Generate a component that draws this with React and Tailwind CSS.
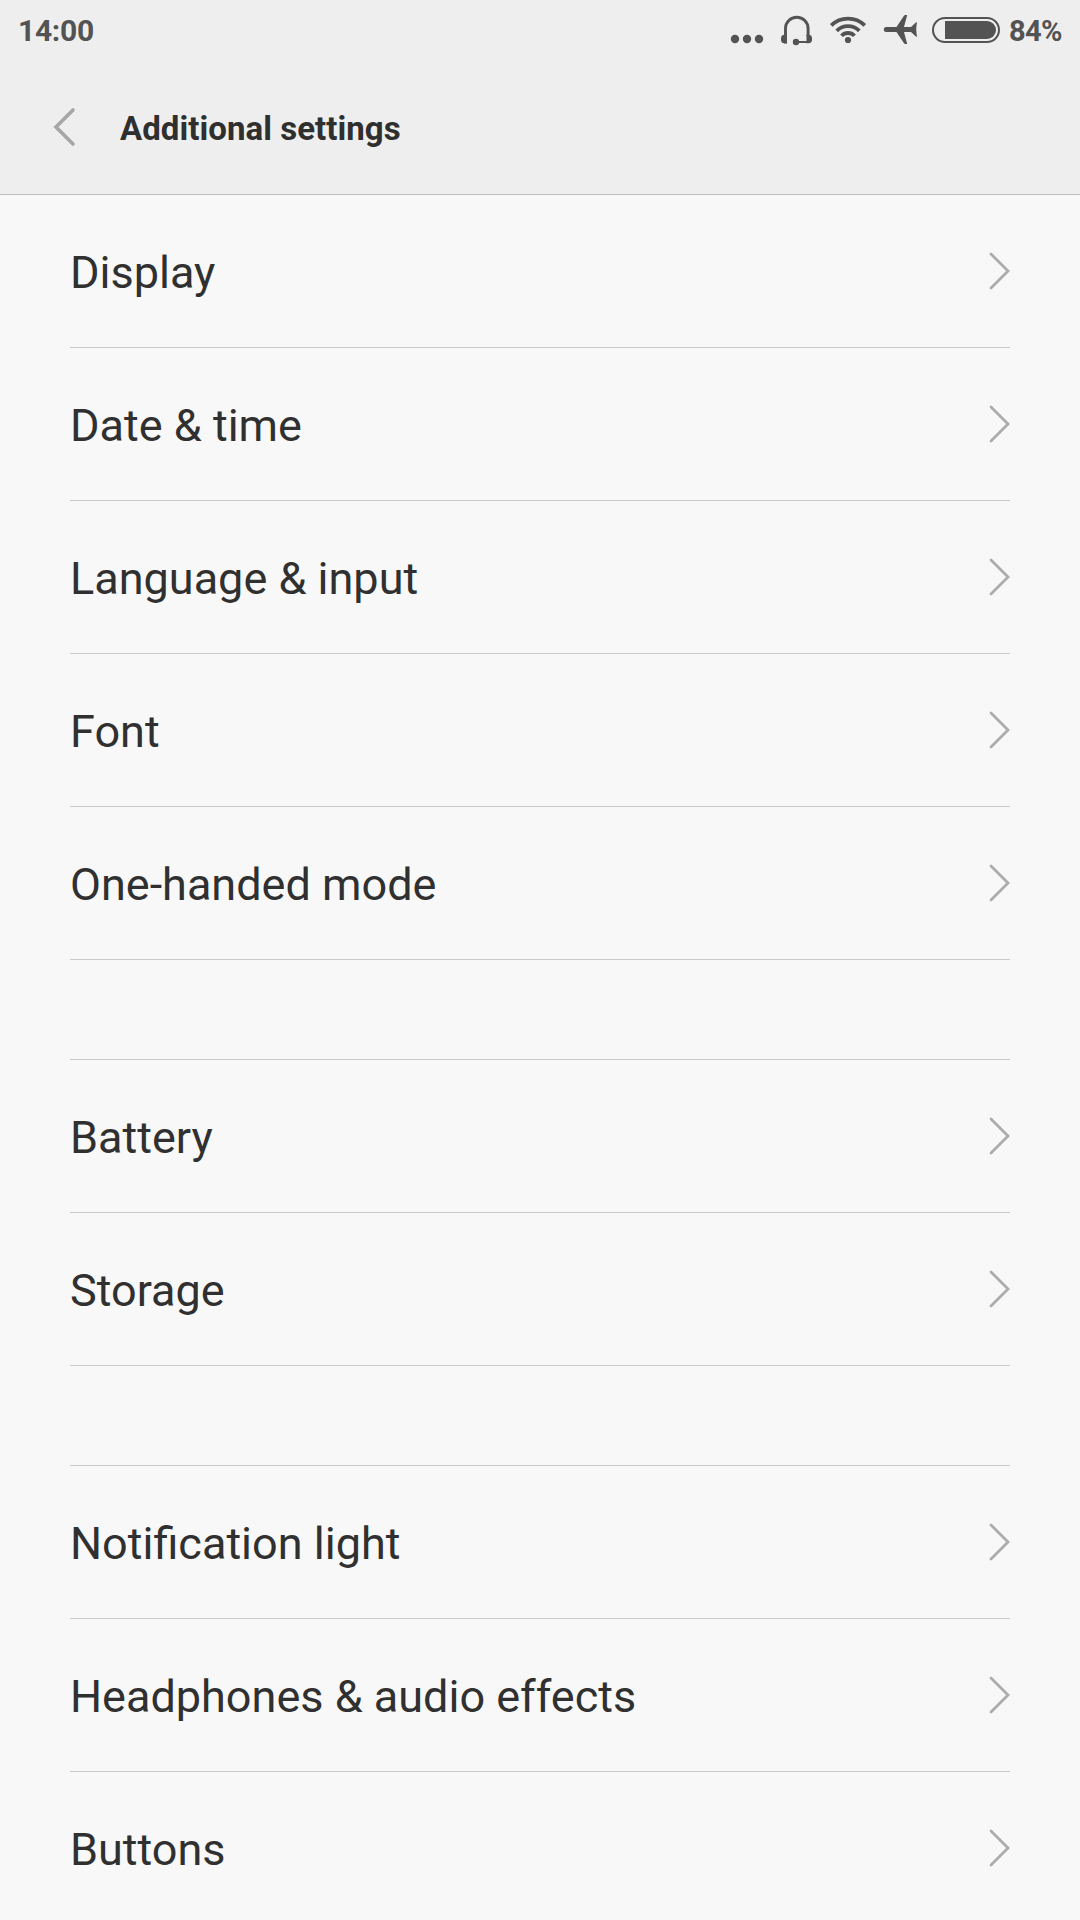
const groups = [
  ["Display", "Date & time", "Language & input", "Font", "One-handed mode"],
  ["Battery", "Storage"],
  ["Notification light", "Headphones & audio effects", "Buttons"],
];

function StatusIcons() {
  return (
    <svg className="h-[60px] w-[280px] shrink-0" viewBox="725 0 280 60" fill="none" stroke="#535353">
      {/* more dots */}
      <g fill="#535353" stroke="none">
        <circle cx="735" cy="39" r="4.2" />
        <circle cx="747" cy="39" r="4.2" />
        <circle cx="759" cy="39" r="4.2" />
      </g>
      {/* headset */}
      <path d="M785.5 43.500V28.500a11.300 11.300 0 0 1 22.600 0V36" strokeWidth="2.900" />
      <path d="M808.500 42H797" strokeWidth="2" />
      <path d="M787 34.700h-2.500a3.500 3.500 0 0 0-3.500 3.500v1.600a3.500 3.500 0 0 0 3.500 3.500h2.500zM806.500 34.700h2.500a3.500 3.500 0 0 1 3 3.500v1.600a3.500 3.500 0 0 1-3 3.500h-2.500z" fill="#535353" stroke="none" />
      <circle cx="796" cy="42" r="3.200" fill="#535353" stroke="none" />
      {/* wifi */}
      <path d="M831.200 25.400a24 24 0 0 1 33.600 0M836.700 30.800a16.200 16.200 0 0 1 22.600 0M841.500 35.800a9 9 0 0 1 13 0" strokeWidth="3.800" />
      <circle cx="848" cy="40" r="3.100" fill="#535353" stroke="none" />
      {/* airplane */}
      <path d="M886.300 27h10.200l7.300-11q.7-1 1.700-1h1.700L904 27h7l4-3.800q.9-.9 2-.9c-1 5-1 9.400 0 14.400q-1.100 0-2-.9l-4-3.800h-7l3.200 12h-1.700q-1 0-1.700-1l-7.300-11h-10.200a2.500 2.500 0 0 1 0-5z" fill="#535353" stroke="none" />
      {/* battery */}
      <rect x="933" y="18" width="66" height="24" rx="12" strokeWidth="2" />
      <path d="M945 21h42a9 9 0 0 1 0 18h-42z" fill="#535353" stroke="none" />
    </svg>
  );
}

function Row({ label }) {
  return (
    <li className="flex h-[153px] items-center justify-between border-b border-[#cacaca]">
      <span className="pt-[3px] text-[45px] leading-none text-[#303030]">{label}</span>
      <svg className="mb-px h-[38px] w-[21px]" viewBox="0 0 21 38" fill="none" stroke="#acacac" strokeWidth="2.800" strokeLinecap="round">
        <path d="M2 2l17 17L2 36" />
      </svg>
    </li>
  );
}

export default function App() {
  return (
    <div className="h-[1920px] w-[1080px] overflow-hidden bg-[#f8f8f8] font-['Roboto',sans-serif]">
      <header className="h-[195px] border-b border-[#bfbfbf] bg-[#eeeeee]">
        <div className="flex h-[60px] items-center text-[#535353]">
          <span className="pt-[2px] pl-[18px] text-[30px] leading-none font-bold tracking-[-0.3px]">14:00</span>
          <div className="ml-auto flex items-center">
            <StatusIcons />
            <span className="w-[75px] pt-[2px] pl-[4px] text-[29px] leading-none font-bold tracking-[-0.6px]">84%</span>
          </div>
        </div>
        <div className="flex h-[134px] items-center pl-[53px]">
          <svg className="h-[40px] w-[24px]" viewBox="0 0 24 40" fill="none" stroke="#a6a6a6" strokeWidth="3.600" strokeLinecap="round">
            <path d="M20 3L3 20l17 17" />
          </svg>
          <h1 className="pt-[2px] pl-[43px] text-[33px] leading-none font-bold tracking-[0.05px] text-[#2f2f2f]">Additional settings</h1>
        </div>
      </header>
      <main className="flex flex-col gap-[99px] px-[70px]">
        {groups.map((items, i) => (
          <ul key={items[0]} className={i > 0 ? "border-t border-[#cacaca]" : ""}>
            {items.map((label) => (
              <Row key={label} label={label} />
            ))}
          </ul>
        ))}
      </main>
    </div>
  );
}
